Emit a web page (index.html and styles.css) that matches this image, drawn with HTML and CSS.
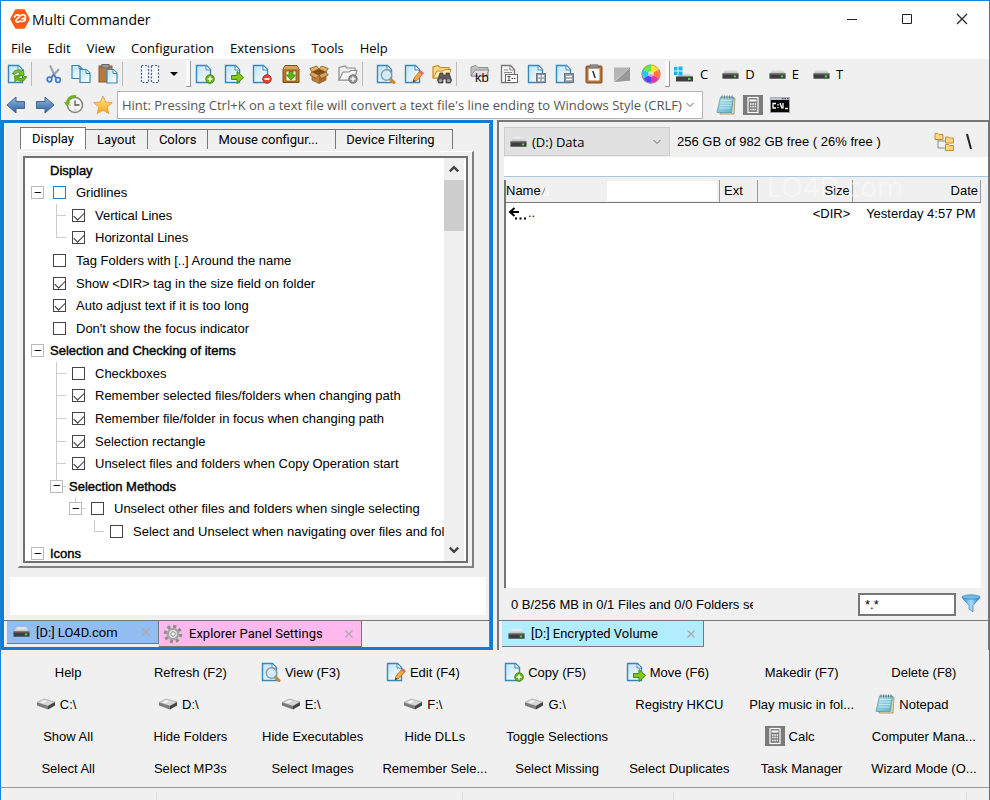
FILE: index.html
```html
<!DOCTYPE html>
<html lang="en">
<head>
  <meta charset="UTF-8" />
  <meta name="viewport" content="width=device-width, initial-scale=1.0"/>
  <title>Multi Commander</title>
  <link rel="stylesheet" href="styles.css">
</head>
<body>
  <!-- icon set -->
  <svg class="defs" width="0" height="0" aria-hidden="true">
    <defs>
      <linearGradient id="gPage" x1="0" y1="0" x2="1" y2="1"><stop offset="0" stop-color="#bfe3f7"/><stop offset="1" stop-color="#fff"/></linearGradient>
      <linearGradient id="gArrow" x1="0" y1="0" x2="0" y2="1"><stop offset="0" stop-color="#8fb8e8"/><stop offset="1" stop-color="#2f5f9c"/></linearGradient>
      <linearGradient id="gStar" x1="0" y1="0" x2="0" y2="1"><stop offset="0" stop-color="#ffe88a"/><stop offset="1" stop-color="#ffa41c"/></linearGradient>
      <linearGradient id="gDrive" x1="0" y1="0" x2="0" y2="1"><stop offset="0" stop-color="#f2f2f2"/><stop offset="1" stop-color="#b5b5b5"/></linearGradient>
      <linearGradient id="gFunnel" x1="0" y1="0" x2="1" y2="0"><stop offset="0" stop-color="#2b8fd6"/><stop offset=".5" stop-color="#a9dcf8"/><stop offset="1" stop-color="#1f78bd"/></linearGradient>
      <linearGradient id="gNote" x1="0" y1="0" x2="1" y2="1"><stop offset="0" stop-color="#b5e6f0"/><stop offset="1" stop-color="#5fb2cb"/></linearGradient>
    </defs>
    <symbol id="doc" viewBox="0 0 20 20">
      <path d="M1.5 1.5h10l4 4v13h-14z" fill="url(#gPage)" stroke="#3589b8" stroke-width="1.4"/>
      <path d="M11 2v4h4.500" fill="#fff" stroke="#3589b8"/>
    </symbol>
    <symbol id="refresh" viewBox="0 0 20 20">
      <use href="#doc"/>
      <path d="M5.500 10c1-4 6-5 9-2.500l2-2 .5 6h-6l2-2c-2-1.500-4-1-5 .8z" fill="#7cc71b" stroke="#3f8a0c" stroke-width=".8"/>
      <path d="M19.500 12.500c-1 4.500-6 6-9.500 3.300l-2 2-.5-6h6l-2 2c2 1.500 4.500.7 5.500-1.300z" fill="#6aba12" stroke="#3f8a0c" stroke-width=".8"/>
    </symbol>
    <symbol id="cut" viewBox="0 0 20 20">
      <path d="M6 1.500l6 13M15 5L7 14" stroke="#9aa3ad" stroke-width="2" fill="none"/>
      <circle cx="5.500" cy="15.500" r="2.300" fill="none" stroke="#3f7cc4" stroke-width="1.700"/>
      <circle cx="14" cy="16" r="2.300" fill="none" stroke="#3f7cc4" stroke-width="1.700"/>
      <path d="M9 10l3.500 4M10 10l-3 4" stroke="#3f7cc4" stroke-width="1.500"/>
    </symbol>
    <symbol id="copy" viewBox="0 0 20 20">
      <path d="M1 1.500h7l3 3v10H1z" fill="url(#gPage)" stroke="#3589b8" stroke-width="1.200"/>
      <path d="M8 1.500v3h3" fill="none" stroke="#3589b8"/>
      <path d="M9 5.500h6.500l3.500 3.500v9.500H9z" fill="url(#gPage)" stroke="#3589b8" stroke-width="1.200"/>
      <path d="M15 5.500v4h4" fill="#fff" stroke="#3589b8"/>
    </symbol>
    <symbol id="paste" viewBox="0 0 20 20">
      <rect x="1" y="2" width="13" height="16" fill="#b67a3c" stroke="#8a5724"/>
      <rect x="4" y=".5" width="7" height="3.500" fill="#9a9a9a" stroke="#666"/>
      <path d="M9 5.500h6.500L19 9v10H9z" fill="url(#gPage)" stroke="#3589b8" stroke-width="1.200"/>
      <path d="M15 5.500v4h4" fill="#fff" stroke="#3589b8"/>
    </symbol>
    <symbol id="columns" viewBox="0 0 20 20">
      <path d="M1.500 1.500h7v17h-7zM11.500 1.500h7v17h-7z" fill="#f6f9fd" stroke="#42608c" stroke-width="1.200" stroke-dasharray="2 1.500"/>
    </symbol>
    <symbol id="docAdd" viewBox="0 0 20 20">
      <use href="#doc"/>
      <circle cx="15" cy="15" r="4.300" fill="#63b512" stroke="#3c820a" stroke-width=".8"/>
      <path d="M12.500 15h5M15 12.500v5" stroke="#fff" stroke-width="1.600"/>
    </symbol>
    <symbol id="docMove" viewBox="0 0 20 20">
      <use href="#doc"/>
      <path d="M7.500 11.500h5.500v-4l6.500 6-6.500 6v-4H7.500z" fill="#86c81a" stroke="#3f8a0c"/>
    </symbol>
    <symbol id="docDelete" viewBox="0 0 20 20">
      <use href="#doc"/>
      <circle cx="15" cy="15" r="4.300" fill="#e2442f" stroke="#a92415" stroke-width=".8"/>
      <path d="M12.500 15h5" stroke="#fff" stroke-width="1.800"/>
    </symbol>
    <symbol id="archive" viewBox="0 0 20 20">
      <path d="M4 1.500h12l2 4v13H2v-13z" fill="#b9792f" stroke="#7d4c16"/>
      <path d="M4 2h12l1.500 3h-15z" fill="#d9a35d"/>
      <rect x="5" y="7" width="10" height="10" fill="#e9f5c8" stroke="#7d4c16" stroke-width=".7"/>
      <path d="M8 7.500h4V11h2.500L10 16l-4.500-5H8z" fill="#5db512" stroke="#357a08" stroke-width=".7"/>
    </symbol>
    <symbol id="box" viewBox="0 0 20 20">
      <path d="M3 8l7 3 7-3v8l-7 3.500L3 16z" fill="#bd8136" stroke="#86571d" stroke-width=".8"/>
      <path d="M10 11v8.500l7-3.500V8z" fill="#a2692a"/>
      <path d="M3 8L.800 4.500 7.500 2 10 5zM17 8l2.200-3.500L12.500 2 10 5z" fill="#e3b26a" stroke="#86571d" stroke-width=".8"/>
      <path d="M3 8l7-3 7 3-7 3z" fill="#7d4e18"/>
      <path d="M3 8l7 3-2.500 3.500L.800 11zM17 8l-7 3 2.500 3.500L19.200 11z" fill="#d9a35d" stroke="#86571d" stroke-width=".8"/>
    </symbol>
    <symbol id="folderAdd" viewBox="0 0 20 20">
      <path d="M1 16V3.500L7 2l2 2h8v12z" fill="#eee" stroke="#8d8d8d" stroke-width="1.200"/>
      <path d="M1 16l4-8h6l2-1.500h6L16 16z" fill="#f7f7f7" stroke="#8d8d8d" stroke-width="1.200"/>
      <circle cx="15" cy="15" r="4.200" fill="#929292" stroke="#6e6e6e"/>
      <path d="M12.500 15h5M15 12.500v5" stroke="#fff" stroke-width="1.500"/>
    </symbol>
    <symbol id="docView" viewBox="0 0 20 20">
      <use href="#doc"/>
      <path d="M14.500 15.500l3.500 3" stroke="#c98a32" stroke-width="3" stroke-linecap="round"/>
      <circle cx="10.500" cy="11" r="5.200" fill="#d3ecf9" stroke="#8b9aa5" stroke-width="1.500"/>
    </symbol>
    <symbol id="docEdit" viewBox="0 0 20 20">
      <use href="#doc"/>
      <path d="M9 18l1-4 6.500-7.500 3 2.500-6.500 7.500z" fill="#f9a63a" stroke="#a8641a" stroke-width=".7"/>
      <path d="M16.500 6.500l3 2.500-1.500 1.700-3-2.500z" fill="#d86a7c"/>
      <path d="M9 18l.7-2.500 1.800 1.500z" fill="#333"/>
    </symbol>
    <symbol id="find" viewBox="0 0 20 20">
      <path d="M1 14V3l5-1.500 2 2h9V14z" fill="#fbd786" stroke="#c98b2a" stroke-width="1.200"/>
      <path d="M1 14l4-7h6l2-1.500h6L16 14z" fill="#ffe9b3" stroke="#c98b2a"/>
      <path d="M8 9h3v2h3V9h3l2.500 7-1 3H14v-4h-3v4H6.500l-1-3z" fill="#5c5c5c" stroke="#333" stroke-width=".7"/>
      <circle cx="8.500" cy="16.500" r="1.600" fill="#a9a9a9"/><circle cx="16.500" cy="16.500" r="1.600" fill="#a9a9a9"/>
    </symbol>
    <symbol id="docName" viewBox="0 0 20 20">
      <path d="M2.500 1.500h9l4 4v13h-13z" fill="#f4f4f4" stroke="#777" stroke-width="1.300"/>
      <path d="M11 2v4h4.500M5 6h4M5 8.500h8" fill="none" stroke="#888"/>
      <rect x="6.500" y="10.500" width="12" height="8" fill="#fff" stroke="#666"/>
      <path d="M8.500 12.500h3M10 12.500v4M8.500 16.500h3M12.500 14.500h1.500M15 14.500h1.500" stroke="#444"/>
    </symbol>
    <symbol id="docGrid" viewBox="0 0 20 20">
      <use href="#doc"/>
      <rect x="9.500" y="9.500" width="9" height="9" fill="#8b98a3" stroke="#6a7680"/>
      <path d="M11 11h2.500v2.500H11zM14.700 11h2.500v2.500h-2.500zM11 14.700h2.500v2.500H11zM14.700 14.700h2.500v2.500h-2.500z" fill="#eef2f5"/>
    </symbol>
    <symbol id="docMinus" viewBox="0 0 20 20">
      <use href="#doc"/>
      <rect x="9.500" y="9.500" width="9" height="9" fill="#8b98a3" stroke="#6a7680"/>
      <path d="M11 12.500h6M11 15.500h6" stroke="#fff" stroke-width="1.300"/>
    </symbol>
    <symbol id="clipboard" viewBox="0 0 20 20">
      <rect x="2" y="2" width="16" height="17" rx="1" fill="#b1713a" stroke="#83501f"/>
      <path d="M4.500 4.500h11v12h-11z" fill="#fff"/>
      <rect x="6" y=".8" width="8" height="3.200" fill="#8e8e8e" stroke="#666" stroke-width=".6"/>
      <path d="M8.800 7l2.400 7" stroke="#222" stroke-width="1.400"/>
    </symbol>
    <symbol id="shade" viewBox="0 0 20 20">
      <path d="M2 3.500h16v13L2 18z" fill="#b5b5b5"/>
      <path d="M18 3.500v13L2 18 16 4z" fill="#999"/>
      <path d="M2 18L17 4" stroke="#d4d4d4"/>
    </symbol>
    <symbol id="wheel" viewBox="0 0 20 20">
      <path d="M10 10V.5a9.500 9.500 0 0 1 8.200 4.750z" fill="#ffe62b"/>
      <path d="M10 10l8.200-4.750a9.500 9.500 0 0 1 0 9.500z" fill="#ff7a3c"/>
      <path d="M10 10l8.200 4.750A9.500 9.500 0 0 1 10 19.500z" fill="#ee2fb0"/>
      <path d="M10 10v9.500a9.500 9.500 0 0 1-8.200-4.750z" fill="#5b3df5"/>
      <path d="M10 10l-8.200 4.750a9.500 9.500 0 0 1 0-9.500z" fill="#26c9ee"/>
      <path d="M10 10L1.800 5.250A9.500 9.500 0 0 1 10 .5z" fill="#63e943"/>
      <circle cx="10" cy="10" r="9" fill="none" stroke="#999" stroke-width=".8"/>
      <circle cx="10" cy="10" r="3" fill="#fff" opacity=".5"/>
    </symbol>
    <symbol id="drive" viewBox="0 0 18 12">
      <path d="M4 1h10l3.500 5H.5z" fill="url(#gDrive)"/>
      <rect x=".5" y="5.500" width="17" height="5.500" fill="#3e3e3e"/>
      <rect x=".5" y="5.500" width="17" height="1" fill="#777"/>
      <rect x="12.500" y="7.500" width="2.500" height="2" fill="#3fe04a"/>
    </symbol>
    <symbol id="winDrive" viewBox="0 0 20 18">
      <path d="M6 8h9l4 4H3z" fill="url(#gDrive)"/>
      <rect x="2" y="11.500" width="17" height="5" fill="#3e3e3e"/>
      <rect x="14" y="13" width="2.500" height="2" fill="#3fe04a"/>
      <path d="M0 2h3.500v3.500H0zM4.500 1.500H8.500v4h-4zM0 6.500h3.500V10H0zM4.500 6.500h4v4h-4z" fill="#18b4ee"/>
    </symbol>
    <symbol id="disk" viewBox="0 0 20 12">
      <path d="M1 4.500L8 1l11 3-7 4z" fill="#d6d6d6" stroke="#999" stroke-width=".6"/>
      <path d="M1 4.500L12 8v3.500L1 7.500z" fill="#7b7b7b"/>
      <path d="M19 4v3.500l-7 4V8z" fill="#444"/>
      <path d="M4 4.300l4.500-2 3 .8-4.500 2.200z" fill="#f7f7f7"/>
    </symbol>
    <symbol id="back" viewBox="0 0 20 20">
      <path d="M1 10l9-8v4.500h8.500v7H10V18z" fill="url(#gArrow)" stroke="#44658f"/>
    </symbol>
    <symbol id="forward" viewBox="0 0 20 20">
      <path d="M19 10l-9-8v4.500H1.500v7H10V18z" fill="url(#gArrow)" stroke="#44658f"/>
    </symbol>
    <symbol id="history" viewBox="0 0 20 20">
      <circle cx="11" cy="10" r="7.500" fill="#f7f7f3" stroke="#85857f" stroke-width="1.600"/>
      <path d="M11 5.500V10h4.500" fill="none" stroke="#555" stroke-width="1.300"/>
      <path d="M11 14.500v1M6.500 10h-1" stroke="#666"/>
      <path d="M12 1.500C7 .5 3.500 3.500 3 8" fill="none" stroke="#6fb51b" stroke-width="2.600"/>
      <path d="M0 7h6.500L3 11.500z" fill="#6fb51b"/>
    </symbol>
    <symbol id="star" viewBox="0 0 20 20">
      <path d="M10 1l2.700 6 6.500.7-4.900 4.400 1.400 6.500-5.700-3.300-5.700 3.300 1.400-6.500L.8 7.700l6.500-.7z" fill="url(#gStar)" stroke="#e8962b" stroke-width=".8"/>
    </symbol>
    <symbol id="notepad" viewBox="0 0 20 20">
      <path d="M5 3h14l-1 16H4z" fill="#e6dcae" stroke="#8b8353" stroke-width=".7"/>
      <path d="M4.500 2h13L15.500 17.500H1z" fill="url(#gNote)" stroke="#4e93a8" stroke-width=".7"/>
      <path d="M5 5.500h11M4.500 8h11M4 10.500h11M3.500 13h11" stroke="#d6f1f6" stroke-width=".7"/>
      <path d="M6 .5v3M8.500 .5v3M11 .5v3M13.500 .5v3M16 .5v3" stroke="#6b6b6b" stroke-width=".9"/>
    </symbol>
    <symbol id="calc" viewBox="0 0 20 20">
      <rect width="20" height="20" fill="#7b7b7b"/>
      <rect x="5" y="2.500" width="10" height="15" fill="#7b7b7b" stroke="#fff" stroke-width="1.200"/>
      <path d="M6.500 5.500h7" stroke="#fff" stroke-width="2"/>
      <path d="M7 9h1.500M9.300 9h1.500M11.600 9h1.500M7 11.500h1.500M9.300 11.500h1.500M11.600 11.500h1.500M7 14.500h1.500M9.300 14.500h1.500M11.600 14.500h1.500" stroke="#fff" stroke-width="1.600"/>
    </symbol>
    <symbol id="cmd" viewBox="0 0 20 20">
      <rect x=".5" y="2.500" width="19" height="15" fill="#050505" stroke="#9aa0a6"/>
      <rect x=".5" y="2.500" width="19" height="2.500" fill="#b9c2d0"/>
      <path d="M12 3.700h1.500M14.500 3.700H16M17 3.700h1.500" stroke="#334"/>
      <path d="M6 8.500H3v4.500h3M8 9v1.500M8 12v1M10 8l2 5.500M13 8v5.500M15 13.500h3" fill="none" stroke="#fff" stroke-width="1.300"/>
    </symbol>
    <symbol id="tree" viewBox="0 0 20 20">
      <path d="M4 8v8h8M4 9h8" fill="none" stroke="#8d8d8d"/>
      <path d="M1 1.500h3l1 1h4v5H1zM11.500 5h3l1 1h4v5h-8zM11.500 12.500h3l1 1h4v5h-8z" fill="#ffd680" stroke="#c98b2a"/>
    </symbol>
    <symbol id="funnel" viewBox="0 0 20 20">
      <path d="M1 3.500h18l-7 8V18l-4-3v-3.500z" fill="url(#gFunnel)" stroke="#2b78b0" stroke-width=".6"/>
      <ellipse cx="10" cy="3" rx="9" ry="2.200" fill="#6dbcec" stroke="#2b78b0" stroke-width=".6"/>
    </symbol>
    <symbol id="gear" viewBox="0 0 20 20">
      <circle cx="10" cy="10" r="7.600" fill="none" stroke="#8d8d8d" stroke-width="3.400" stroke-dasharray="3 2.970"/>
      <circle cx="10" cy="10" r="5.200" fill="#e4e4e4" stroke="#a5a5a5" stroke-width="2.500"/>
      <circle cx="10" cy="10" r="2.200" fill="#fdfdfd" stroke="#8b8b8b"/>
    </symbol>
    <symbol id="chevron" viewBox="0 0 10 6"><path d="M1.500 1L5 4.500 8.500 1" fill="none" stroke="currentColor"/></symbol>
    <symbol id="cross" viewBox="0 0 10 10"><path d="M1.500 1.500l7 7M8.500 1.500l-7 7" stroke="#aaa" stroke-width="1.300"/></symbol>
  </svg>

  <header class="titlebar">
    <svg class="logo" width="20" height="20" viewBox="0 0 20 20" aria-hidden="true">
      <path d="M5.500.8h9L19.400 10l-4.900 9.200h-9L.6 10z" fill="#fb5a14" stroke="#fb5a14" stroke-linejoin="round"/>
      <path d="M4.500 8c1-2.500 4.500-3 5-.8.3 2-4 2.300-3.700 4.800.2 1.500 3 1.500 4.200 0M9.500 7.500c1.500-2 5.500-2.500 6 0 .2 1.500-1.500 2.300-3.500 2.300M15 8.500c1.500 3-1.500 5-5 3.500" fill="none" stroke="#fff" stroke-width="1.600" stroke-linecap="round"/>
    </svg>
    <h1>Multi Commander</h1>
    <div class="window-buttons">
      <button aria-label="Minimize"><svg width="12" height="12"><path d="M1 6.500h10" stroke="#222"/></svg></button>
      <button aria-label="Maximize"><svg width="12" height="12"><path d="M1.500 1.500h9v9h-9z" fill="none" stroke="#222"/></svg></button>
      <button aria-label="Close"><svg width="12" height="12"><path d="M1 1l10 10M11 1L1 11" stroke="#222" stroke-width="1.200"/></svg></button>
    </div>
  </header>

  <nav class="menu">
    <button>File</button>
    <button>Edit</button>
    <button>View</button>
    <button>Configuration</button>
    <button>Extensions</button>
    <button>Tools</button>
    <button>Help</button>
  </nav>

  <div class="toolbar">
    <div class="group one"><button aria-label="Refresh"><svg><use href="#refresh"/></svg></button></div>
    <span class="sep"></span>
    <div class="group clip">
      <button aria-label="Cut"><svg><use href="#cut"/></svg></button>
      <button aria-label="Copy"><svg><use href="#copy"/></svg></button>
      <button aria-label="Paste"><svg><use href="#paste"/></svg></button>
    </div>
    <span class="sep"></span>
    <div class="group split">
      <button aria-label="Columns"><svg><use href="#columns"/></svg></button>
      <button class="caret" aria-label="More columns"></button>
    </div>
    <span class="grip"></span>
    <div class="group files">
      <button aria-label="New file"><svg><use href="#docAdd"/></svg></button>
      <button aria-label="Move"><svg><use href="#docMove"/></svg></button>
      <button aria-label="Delete"><svg><use href="#docDelete"/></svg></button>
      <button aria-label="Pack"><svg><use href="#archive"/></svg></button>
      <button aria-label="Unpack"><svg><use href="#box"/></svg></button>
      <button aria-label="New folder"><svg><use href="#folderAdd"/></svg></button>
    </div>
    <span class="sep"></span>
    <div class="group view">
      <button aria-label="View"><svg><use href="#docView"/></svg></button>
      <button aria-label="Edit"><svg><use href="#docEdit"/></svg></button>
      <button aria-label="Find"><svg><use href="#find"/></svg></button>
    </div>
    <span class="sep"></span>
    <div class="group tools">
      <button aria-label="Folder sizes">
        <svg viewBox="0 0 20 20">
          <path d="M1 12V3l5-1.500 2 2h10V12z" fill="#c3c3c3" stroke="#8d8d8d"/>
          <path d="M1 12l4-6h14l-3 6z" fill="#e2e2e2" stroke="#8d8d8d"/>
          <text x="5" y="18" font-size="13" fill="#111">kb</text>
        </svg>
      </button>
      <button aria-label="Rename"><svg><use href="#docName"/></svg></button>
      <button aria-label="Select"><svg><use href="#docGrid"/></svg></button>
      <button aria-label="Unselect"><svg><use href="#docMinus"/></svg></button>
      <button aria-label="Clipboard path"><svg><use href="#clipboard"/></svg></button>
      <button aria-label="Compare"><svg><use href="#shade"/></svg></button>
      <button aria-label="Colors"><svg><use href="#wheel"/></svg></button>
    </div>
    <span class="grip"></span>
    <div class="drives">
      <button><svg class="win"><use href="#winDrive"/></svg>C</button>
      <button><svg><use href="#drive"/></svg>D</button>
      <button><svg><use href="#drive"/></svg>E</button>
      <button><svg><use href="#drive"/></svg>T</button>
    </div>
  </div>

  <div class="toolbar second">
    <div class="group nav">
      <button aria-label="Back"><svg><use href="#back"/></svg></button>
      <button aria-label="Forward"><svg><use href="#forward"/></svg></button>
      <button aria-label="History"><svg><use href="#history"/></svg></button>
      <button aria-label="Favorites"><svg><use href="#star"/></svg></button>
    </div>
    <div class="combo hint">
      <select aria-label="Command line"><option>Hint: Pressing Ctrl+K on a text file will convert a text file's line ending to Windows Style (CRLF)</option></select>
      <svg><use href="#chevron"/></svg>
    </div>
    <div class="group apps">
      <button aria-label="Notepad"><svg><use href="#notepad"/></svg></button>
      <button aria-label="Calculator"><svg><use href="#calc"/></svg></button>
      <button aria-label="Command prompt"><svg><use href="#cmd"/></svg></button>
    </div>
  </div>

  <main class="panels">
    <section class="panel settings">
      <div class="config-tabs">
        <button class="active">Display</button>
        <button>Layout</button>
        <button>Colors</button>
        <button class="wide">Mouse configur...</button>
        <button class="wide">Device Filtering</button>
      </div>
      <div class="page">
        <div class="tree-box">
          <div class="tree">
            <div class="row"><i></i><b>Display</b></div>
            <div class="row"><i><button>−</button></i><input type="checkbox" id="c1" class="hot"><label for="c1">Gridlines</label></div>
            <div class="row"><i></i><i class="tee"></i><input type="checkbox" id="c2" checked><label for="c2">Vertical Lines</label></div>
            <div class="row"><i></i><i class="elbow"></i><input type="checkbox" id="c3" checked><label for="c3">Horizontal Lines</label></div>
            <div class="row"><i></i><input type="checkbox" id="c4"><label for="c4">Tag Folders with [..] Around the name</label></div>
            <div class="row"><i></i><input type="checkbox" id="c5" checked><label for="c5">Show &lt;DIR&gt; tag in the size field on folder</label></div>
            <div class="row"><i></i><input type="checkbox" id="c6" checked><label for="c6">Auto adjust text if it is too long</label></div>
            <div class="row"><i></i><input type="checkbox" id="c7"><label for="c7">Don't show the focus indicator</label></div>
            <div class="row"><i><button>−</button></i><b>Selection and Checking of items</b></div>
            <div class="row"><i></i><i class="tee"></i><input type="checkbox" id="c8"><label for="c8">Checkboxes</label></div>
            <div class="row"><i></i><i class="tee"></i><input type="checkbox" id="c9" checked><label for="c9">Remember selected files/folders when changing path</label></div>
            <div class="row"><i></i><i class="tee"></i><input type="checkbox" id="c10" checked><label for="c10">Remember file/folder in focus when changing path</label></div>
            <div class="row"><i></i><i class="tee"></i><input type="checkbox" id="c11" checked><label for="c11">Selection rectangle</label></div>
            <div class="row"><i></i><i class="tee"></i><input type="checkbox" id="c12" checked><label for="c12">Unselect files and folders when Copy Operation start</label></div>
            <div class="row"><i></i><i class="elbow"><button>−</button></i><b>Selection Methods</b></div>
            <div class="row"><i></i><i></i><i class="elbow"><button>−</button></i><input type="checkbox" id="c13"><label for="c13">Unselect other files and folders when single selecting</label></div>
            <div class="row"><i></i><i></i><i></i><i class="elbow"></i><input type="checkbox" id="c14"><label for="c14">Select and Unselect when navigating over files and folders</label></div>
            <div class="row"><i><button>−</button></i><b>Icons</b></div>
          </div>
          <div class="scrollbar">
            <button aria-label="Scroll up"><svg class="flip"><use href="#chevron"/></svg></button>
            <div class="thumb"></div>
            <button aria-label="Scroll down"><svg><use href="#chevron"/></svg></button>
          </div>
        </div>
      </div>
      <div class="description"></div>
      <div class="panel-tabs">
        <div class="panel-tab blue"><svg class="drv"><use href="#drive"/></svg><a href="#">[D:] LO4D.com</a><button aria-label="Close tab"><svg><use href="#cross"/></svg></button></div>
        <div class="panel-tab pink"><svg class="gear"><use href="#gear"/></svg><a href="#">Explorer Panel Settings</a><button aria-label="Close tab"><svg><use href="#cross"/></svg></button></div>
      </div>
    </section>

    <section class="panel explorer">
      <div class="drive-bar">
        <div class="combo drive-select">
          <svg class="drv"><use href="#drive"/></svg>
          <select aria-label="Drive"><option>(D:) Data</option></select>
          <svg><use href="#chevron"/></svg>
        </div>
        <span>256 GB of 982 GB free ( 26% free )</span>
        <button class="tree-btn" aria-label="Folder tree"><svg><use href="#tree"/></svg></button>
        <button class="root" aria-label="Root folder"><svg viewBox="0 0 8 20"><path d="M2 2l4 15" stroke="#222" stroke-width="2"/></svg></button>
      </div>
      <input class="path" type="text" aria-label="Path">
      <div class="list">
        <table>
          <thead>
            <tr><th class="name"><div>Name<svg width="9" height="10"><path d="M1 9l3.500-8" stroke="#888"/><path d="M4.500 1L8 9H1" stroke="#fff" fill="none"/></svg><span></span></div></th><th class="ext">Ext</th><th class="size">Size</th><th class="date">Date</th></tr>
          </thead>
          <tbody>
            <tr><td><svg width="20" height="16"><path d="M2 6h9M6.500 2L2 6l4.500 4" fill="none" stroke="#000" stroke-width="2"/><path d="M7 12.500h2M11.500 12.500h2M16 12.500h2" stroke="#000" stroke-width="2"/></svg>..</td><td></td><td class="size">&lt;DIR&gt;</td><td class="date">Yesterday 4:57 PM</td></tr>
          </tbody>
        </table>
        <div class="watermark" aria-hidden="true">LO4D.com</div>
      </div>
      <div class="summary">
        <span>0 B/256 MB in 0/1 Files and 0/0 Folders selected</span>
        <input type="text" value="*.*" aria-label="Filter">
        <button aria-label="Apply filter"><svg><use href="#funnel"/></svg></button>
      </div>
      <div class="panel-tabs">
        <div class="panel-tab cyan"><svg class="drv"><use href="#drive"/></svg><a href="#">[D:] Encrypted Volume</a><button aria-label="Close tab"><svg><use href="#cross"/></svg></button></div>
      </div>
    </section>
  </main>

  <div class="commands">
    <button>Help</button>
    <button>Refresh (F2)</button>
    <button><svg><use href="#docView"/></svg>View (F3)</button>
    <button><svg><use href="#docEdit"/></svg>Edit (F4)</button>
    <button><svg><use href="#docAdd"/></svg>Copy (F5)</button>
    <button><svg><use href="#docMove"/></svg>Move (F6)</button>
    <button>Makedir (F7)</button>
    <button>Delete (F8)</button>
    <button><svg><use href="#disk"/></svg>C:\</button>
    <button><svg><use href="#disk"/></svg>D:\</button>
    <button><svg><use href="#disk"/></svg>E:\</button>
    <button><svg><use href="#disk"/></svg>F:\</button>
    <button><svg><use href="#disk"/></svg>G:\</button>
    <button>Registry HKCU</button>
    <button>Play music in fol...</button>
    <button><svg><use href="#notepad"/></svg>Notepad</button>
    <button>Show All</button>
    <button>Hide Folders</button>
    <button>Hide Executables</button>
    <button>Hide DLLs</button>
    <button>Toggle Selections</button>
    <span></span>
    <button><svg><use href="#calc"/></svg>Calc</button>
    <button>Computer Mana...</button>
    <button>Select All</button>
    <button>Select MP3s</button>
    <button>Select Images</button>
    <button>Remember Sele...</button>
    <button>Select Missing</button>
    <button>Select Duplicates</button>
    <button>Task Manager</button>
    <button>Wizard Mode (O...</button>
  </div>

  <footer class="statusbar"><span></span><span></span><span></span><span></span></footer>
</body>
</html>
```
FILE: styles.css
```css
* {
  box-sizing: border-box;
}

body {
  margin: 0;
  height: 100vh;
  min-height: 600px;
  display: flex;
  flex-direction: column;
  overflow: hidden;
  border: 1px solid #1883d7;
  border-bottom: none;
  background: #f0f0f0;
  color: #000;
  font-family: 'Liberation Sans', Arial, sans-serif;
  font-size: 13px;
}

button, input, select {
  margin: 0;
  padding: 0;
  border: none;
  background: none;
  font: inherit;
  color: inherit;
}

button {
  display: flex;
  align-items: center;
  justify-content: center;
}

.defs {
  position: absolute;
}

/* title and menu */
.titlebar {
  display: flex;
  align-items: center;
  height: 36px;
  padding-left: 9px;
  background: #fff;
}

.titlebar h1 {
  flex: 1;
  margin: 0 0 0 2px;
  font: 14px 'Open Sans', sans-serif;
}

.window-buttons {
  display: flex;
}

.window-buttons button {
  width: 55px;
  height: 34px;
}

.menu {
  display: flex;
  gap: 16px;
  height: 22px;
  padding-left: 10px;
  background: #fff;
  font: 13px 'Open Sans', sans-serif;
}

/* toolbars */
.toolbar {
  display: flex;
  align-items: center;
  height: 30px;
  padding-left: 1px;
}

.toolbar svg {
  width: 20px;
  height: 20px;
}

.second {
  height: 31px;
}

.group {
  display: flex;
  flex: none;
}

.group button {
  flex: 1;
  height: 28px;
}

.one { width: 29px; }
.clip { width: 82px; margin-left: 7px; }
.split { width: 62px; padding-left: 14px; }
.files { width: 171px; }
.view { width: 84px; margin-left: 8px; }
.tools { width: 199px; margin-left: 8px; }
.nav { width: 115px; }
.apps { width: 82px; margin-left: 9px; }

.caret::before {
  content: "";
  border: 4px solid transparent;
  border-top-color: #000;
  border-bottom: none;
}

.sep {
  width: 2px;
  height: 24px;
  border-left: 1px solid #bbb;
}

.grip {
  width: 5px;
  height: 26px;
  border: solid #999;
  border-width: 0 1px 1px 0;
  background: #fafafa;
}

.drives {
  display: flex;
  gap: 14px;
  margin-left: 4px;
  font: 13px 'Open Sans', sans-serif;
}

.drives button {
  gap: 6px;
}

.drives svg {
  width: 17px;
  height: 12px;
}

.drives .win {
  width: 20px;
  height: 18px;
}

.combo {
  display: grid;
  grid-template-columns: 1fr 20px;
  align-items: center;
}

.combo select {
  grid-area: 1 / 1 / 2 / 3;
  min-width: 0;
  height: 100%;
  appearance: none;
}

.combo use {
  color: #666;
}

.combo svg:last-child {
  grid-area: 1 / 2;
  width: 10px;
  height: 6px;
  margin-left: 3px;
  pointer-events: none;
}

.hint {
  width: 586px;
  height: 28px;
  border: 1px solid #b5b5b5;
  background: #fff;
  color: #555;
  font: 13px 'Open Sans', sans-serif;
}

.hint select {
  padding-left: 4px;
}

/* panels */
.panels {
  flex: 1;
  display: grid;
  grid-template-columns: 1fr 1fr;
  grid-template-rows: minmax(0, 1fr);
  gap: 4px;
  min-height: 0;
}

.panel {
  min-width: 0;
  display: flex;
  flex-direction: column;
}

.settings {
  border: 3px solid #0f7bdb;
  box-shadow: inset 1px 1px #fff, inset -1px 0 #777;
}

.config-tabs {
  display: flex;
  align-items: flex-end;
  height: 26px;
  margin: 0 16px;
  font-family: Roboto, Tahoma, sans-serif;
}

.config-tabs button {
  height: 20px;
  padding: 0 11px;
  border: solid #777;
  border-width: 1px 1px 0 0;
}

.config-tabs .active {
  height: 22px;
  border-left-width: 1px;
  background: #fff;
}

.config-tabs .wide {
  padding: 0 17px 0 10px;
}

.page {
  flex: 1;
  min-height: 0;
  display: flex;
  margin: 2px 16px 0 14px;
  padding: 4px 4px 3px;
  border: solid;
  border-width: 1px 2px 2px 1px;
  border-color: #fff #808080 #808080 #fff;
}

.tree-box {
  flex: 1;
  min-width: 0;
  display: flex;
  padding-right: 2px;
  overflow: hidden;
  border: 2px solid #707070;
  background: #fff;
}

.tree {
  flex: 1;
  min-width: 0;
  display: flex;
  flex-direction: column;
  margin-bottom: -4px;
  padding: 1px 0 0 3px;
  overflow: hidden;
}

.row {
  flex: 1;
  display: flex;
  align-items: center;
  white-space: nowrap;
}

.row i {
  flex: none;
  display: flex;
  align-items: center;
  align-self: stretch;
  justify-content: center;
  width: 19px;
}

.row button {
  width: 13px;
  height: 13px;
  border: 1px solid #bbb;
  background: #fff;
  line-height: 10px;
}

.row b {
  margin-left: 3px;
  font-weight: normal;
  -webkit-text-stroke: 0.4px #000;
}

.row label {
  margin-left: 10px;
}

.tee {
  background: linear-gradient(#ccc, #ccc) 9px 0 / 1px 100% no-repeat, linear-gradient(#ccc, #ccc) 9px 50% / 10px 1px no-repeat;
}

.elbow {
  background: linear-gradient(#ccc, #ccc) 9px 0 / 1px 50% no-repeat, linear-gradient(#ccc, #ccc) 9px 50% / 10px 1px no-repeat;
}

input[type="checkbox"] {
  flex: none;
  display: flex;
  justify-content: center;
  width: 13px;
  height: 13px;
  margin-left: 6px;
  border: 1px solid #444;
  background: #fff;
  appearance: none;
}

input[type="checkbox"]:checked::before {
  content: "";
  width: 9px;
  height: 5px;
  margin-top: 2px;
  border: solid #333;
  border-width: 0 0 1px 1px;
  transform: rotate(-45deg);
}

input[type="checkbox"].hot {
  border-color: #1883d7;
}

.scrollbar {
  width: 20px;
  display: flex;
  flex-direction: column;
  background: #f0f0f0;
}

.scrollbar button {
  height: 22px;
}

.scrollbar svg {
  width: 12px;
  height: 8px;
  color: #444;
  stroke-width: 2;
}

.flip {
  transform: scaleY(-1);
}

.thumb {
  height: 51px;
  margin-bottom: auto;
  background: #cdcdcd;
}

.description {
  height: 38px;
  margin: 9px 4px 5px 6px;
  background: #fff;
}

.panel-tabs {
  display: flex;
  align-items: flex-start;
  height: 27px;
  padding-left: 3px;
  border-top: 1px solid #777;
  font-family: Roboto, Tahoma, sans-serif;
}

.panel-tab {
  display: flex;
  align-items: center;
  height: 26px;
  padding: 0 7px 0 6px;
  border: solid #777;
  border-width: 0 1px 1px 0;
}

.panel-tab a {
  flex: 1;
  margin-left: 6px;
  color: #000;
  text-decoration: none;
  white-space: nowrap;
}

.panel-tab button svg {
  width: 10px;
  height: 10px;
}

.drv {
  width: 17px;
  height: 12px;
}

.gear {
  width: 20px;
  height: 20px;
}

.blue { width: 152px; height: 23px; background: #91bdf2; }
.pink { width: 203px; padding-left: 4px; background: #ffb9ee; }
.cyan { width: 202px; background: #b1edff; }

/* explorer */
.explorer {
  border: solid #777;
  border-width: 2px 1px 0 2px;
}

.drive-bar {
  display: flex;
  align-items: center;
  height: 35px;
  padding: 5px 15px 1px 5px;
}

.drive-select {
  width: 166px;
  height: 29px;
  margin-right: 7px;
  border: 1px solid #ccc;
  background: #e1e1e1;
  font: 13px 'Open Sans', sans-serif;
}

.drive-select .drv {
  grid-area: 1 / 1;
  margin-left: 5px;
}

.drive-select select {
  padding-left: 27px;
}

.tree-btn {
  margin-left: auto;
}

.tree-btn svg {
  width: 20px;
  height: 20px;
}

.root svg {
  width: 8px;
  height: 20px;
  margin-left: 11px;
}

.path {
  height: 20px;
  margin-left: 5px;
  border-bottom: 1px solid #a8c7de;
  background: #fff;
}

.list {
  flex: 1;
  min-height: 0;
  position: relative;
  margin: 3px 7px 0 5px;
  background: #fff;
  border-left: 2px solid #777;
}

table {
  width: 100%;
  border-collapse: collapse;
  table-layout: fixed;
}

th {
  height: 22px;
  padding: 0 2px;
  border-right: 1px solid #999;
  border-bottom: 1px solid #777;
  background: #f0f0f0;
  font-weight: normal;
  text-align: left;
}

.name { width: 45%; padding-left: 0; }
.ext { width: 8%; padding-left: 4px; }
.size { width: 20%; text-align: right; }
.date { text-align: right; }

.name div {
  display: flex;
  align-items: center;
}

.name span {
  width: 110px;
  height: 20px;
  margin-left: auto;
  background: #fff;
}

td {
  height: 23px;
  padding: 0 2px;
}

td.date {
  padding-right: 5px;
}

td svg {
  vertical-align: middle;
}

.watermark {
  position: absolute;
  top: -9px;
  right: 78px;
  color: #fff;
  opacity: 0.4;
  font: 28px/30px 'Open Sans', sans-serif;
}

.summary {
  display: flex;
  align-items: center;
  height: 32px;
  padding: 0 7px 0 12px;
}

.summary span {
  width: 242px;
  overflow: hidden;
  white-space: nowrap;
}

.summary input {
  width: 98px;
  height: 23px;
  margin-left: auto;
  margin-right: 5px;
  padding-left: 5px;
  border: 2px solid #777;
  background: #fff;
}

.summary svg {
  width: 20px;
  height: 20px;
}

.explorer .panel-tabs {
  height: 30px;
}

/* command buttons */
.commands {
  display: grid;
  grid-template-columns: repeat(8, 1fr);
  grid-auto-rows: 32px;
  padding: 6px 4px 3px 6px;
}

.commands button {
  gap: 4px;
  white-space: nowrap;
}

/* the icon hangs to the left so the label stays centred */
.commands svg {
  width: 20px;
  height: 20px;
  margin-left: -24px;
}

.statusbar {
  display: grid;
  grid-template-columns: 156fr 306fr 211fr 293fr 22fr;
  height: 13px;
  padding-top: 4px;
  border-top: 1px solid #999;
}

.statusbar span {
  border-right: 1px solid #ddd;
}
```
